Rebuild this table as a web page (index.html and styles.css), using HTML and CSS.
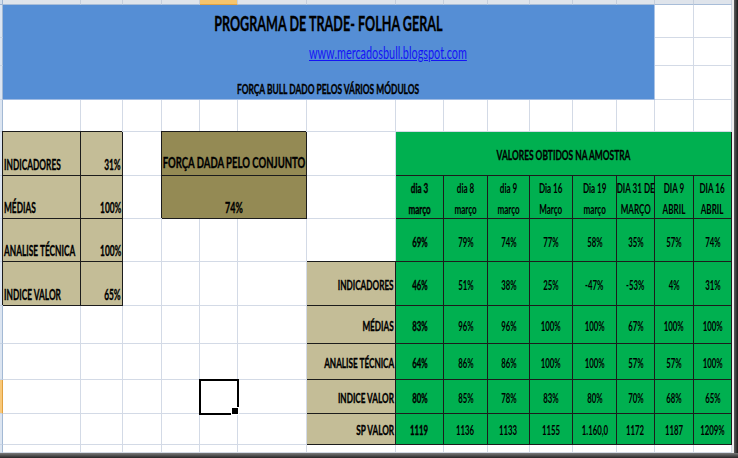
FILE: index.html
```html
<!DOCTYPE html>
<html lang="pt">
<head>
<meta charset="utf-8">
<title>Programa de Trade - Folha Geral</title>
<link rel="stylesheet" href="styles.css">
</head>
<body>
<div class="win">
  <div class="corner"></div>
  <div class="colhead">
    <div></div><div></div><div></div><div></div><div class="on"></div><div></div><div></div><div></div><div></div><div></div><div></div><div></div><div></div><div></div><div></div>
  </div>
  <div class="frame-r"></div>
  <div class="rowhead">
    <div></div><div></div><div></div><div></div><div></div><div></div><div></div><div></div><div></div><div></div><div class="on"></div><div></div><div></div>
  </div>
  <div class="sheet">
    <div class="e"></div><div class="e"></div><div class="e"></div><div class="e"></div><div class="e"></div><div class="e"></div><div class="e"></div><div class="e"></div><div class="e"></div><div class="e"></div>
    <div class="e"></div><div class="e"></div><div class="e"></div><div class="e"></div><div class="e"></div><div class="e"></div><div class="e"></div><div class="e"></div><div class="e"></div><div class="e"></div>
    <div class="e"></div><div class="e"></div><div class="e"></div><div class="e"></div><div class="e"></div><div class="e"></div><div class="e"></div><div class="e"></div><div class="e"></div><div class="e"></div>
    <div class="e"></div><div class="e"></div><div class="e"></div><div class="e"></div><div class="e"></div><div class="e"></div><div class="e"></div><div class="e"></div><div class="e"></div><div class="e"></div>
    <div class="e"></div><div class="e"></div><div class="e"></div><div class="e"></div><div class="e"></div><div class="e"></div><div class="e"></div><div class="e"></div><div class="e"></div><div class="e"></div>
    <div class="e"></div><div class="e"></div><div class="e"></div><div class="e"></div><div class="e"></div><div class="e"></div><div class="e"></div><div class="e"></div><div class="e"></div><div class="e"></div>
    <div class="e"></div><div class="e"></div><div class="e"></div><div class="e"></div><div class="e"></div><div class="e"></div><div class="e"></div><div class="e"></div><div class="e"></div>

    <div class="banner">
      <div class="b-title"><span class="t">PROGRAMA DE TRADE- FOLHA GERAL</span></div>
      <div class="b-link"><a class="t" href="#">www.mercadosbull.blogspot.com</a></div>
      <div class="b-sub"><span class="t">FORÇA BULL DADO PELOS VÁRIOS MÓDULOS</span></div>
    </div>

    <div class="lt">
      <div class="k"><span class="t">INDICADORES</span></div><div class="v"><span class="t">31%</span></div>
      <div class="k"><span class="t">MÉDIAS</span></div><div class="v"><span class="t">100%</span></div>
      <div class="k"><span class="t">ANALISE TÉCNICA</span></div><div class="v"><span class="t">100%</span></div>
      <div class="k"><span class="t">INDICE VALOR</span></div><div class="v"><span class="t">65%</span></div>
    </div>

    <div class="ol">
      <div class="ol-h"><span class="t">FORÇA DADA PELO CONJUNTO</span></div>
      <div class="ol-v"><span class="t">74%</span></div>
    </div>

    <div class="res">
      <div class="w"></div>
      <div class="hd"><span class="t">VALORES OBTIDOS NA AMOSTRA</span></div>

      <div class="w"></div>
      <div class="d b"><span class="t">dia 3<br>março</span></div>
      <div class="d"><span class="t">dia 8<br>março</span></div>
      <div class="d"><span class="t">dia 9<br>março</span></div>
      <div class="d"><span class="t">Dia 16<br>Março</span></div>
      <div class="d"><span class="t">Dia 19<br>março</span></div>
      <div class="d"><span class="t">DIA 31 DE<br>MARÇO</span></div>
      <div class="d"><span class="t">DIA 9<br>ABRIL</span></div>
      <div class="d"><span class="t">DIA 16<br>ABRIL</span></div>

      <div class="w"></div>
      <div class="g top b"><span class="t">69%</span></div>
      <div class="g top"><span class="t">79%</span></div>
      <div class="g top"><span class="t">74%</span></div>
      <div class="g top"><span class="t">77%</span></div>
      <div class="g top"><span class="t">58%</span></div>
      <div class="g top"><span class="t">35%</span></div>
      <div class="g top"><span class="t">57%</span></div>
      <div class="g top"><span class="t">74%</span></div>

      <div class="lb"><span class="t">INDICADORES</span></div>
      <div class="g b"><span class="t">46%</span></div>
      <div class="g"><span class="t">51%</span></div>
      <div class="g"><span class="t">38%</span></div>
      <div class="g"><span class="t">25%</span></div>
      <div class="g"><span class="t">-47%</span></div>
      <div class="g"><span class="t">-53%</span></div>
      <div class="g"><span class="t">4%</span></div>
      <div class="g"><span class="t">31%</span></div>

      <div class="lb"><span class="t">MÉDIAS</span></div>
      <div class="g b"><span class="t">83%</span></div>
      <div class="g"><span class="t">96%</span></div>
      <div class="g"><span class="t">96%</span></div>
      <div class="g"><span class="t">100%</span></div>
      <div class="g"><span class="t">100%</span></div>
      <div class="g"><span class="t">67%</span></div>
      <div class="g"><span class="t">100%</span></div>
      <div class="g"><span class="t">100%</span></div>

      <div class="lb"><span class="t">ANALISE TÉCNICA</span></div>
      <div class="g b"><span class="t">64%</span></div>
      <div class="g"><span class="t">86%</span></div>
      <div class="g"><span class="t">86%</span></div>
      <div class="g"><span class="t">100%</span></div>
      <div class="g"><span class="t">100%</span></div>
      <div class="g"><span class="t">57%</span></div>
      <div class="g"><span class="t">57%</span></div>
      <div class="g"><span class="t">100%</span></div>

      <div class="lb"><span class="t">INDICE VALOR</span></div>
      <div class="g b"><span class="t">80%</span></div>
      <div class="g"><span class="t">85%</span></div>
      <div class="g"><span class="t">78%</span></div>
      <div class="g"><span class="t">83%</span></div>
      <div class="g"><span class="t">80%</span></div>
      <div class="g"><span class="t">70%</span></div>
      <div class="g"><span class="t">68%</span></div>
      <div class="g"><span class="t">65%</span></div>

      <div class="lb"><span class="t">SP VALOR</span></div>
      <div class="g b"><span class="t">1119</span></div>
      <div class="g"><span class="t">1136</span></div>
      <div class="g"><span class="t">1133</span></div>
      <div class="g"><span class="t">1155</span></div>
      <div class="g"><span class="t">1.160,0</span></div>
      <div class="g"><span class="t">1172</span></div>
      <div class="g"><span class="t">1187</span></div>
      <div class="g"><span class="t">1209%</span></div>
    </div>

    <div class="cur"></div>
  </div>
  <div class="frame-b"></div>
</div>
</body>
</html>
```

FILE: styles.css
```css
:root {
  --cols: 78px 42px 39px 38px 38px 69px 89px 48px 44px 42px 43px 44px 38px 39px 38px;
  --rows: 33px 28px 34px 32px 44px 43px 43px 44px 38px 36px 34px 31px 8px;
  --grid: #d3dae6;
  --dk: #1c1c1c;
  --blue: #558ed5;
  --green: #00b050;
  --tan: #c4bd97;
  --olive: #948a54;
}

* { box-sizing: border-box; margin: 0; padding: 0; }

html, body {
  width: 738px;
  height: 458px;
  overflow: hidden;
  background: #fff;
}

body {
  font-family: Lato, "Open Sans", "Liberation Sans", sans-serif;
  font-weight: 700;
  color: #000;
}

.win {
  display: grid;
  grid-template-columns: 3px 729px 6px;
  grid-template-rows: 5px 448px 5px;
  width: 738px;
  height: 458px;
}

.corner {
  grid-row: 1; grid-column: 1;
  background: #d3deec;
  border-right: 1px solid #9fb6d2;
  border-bottom: 1px solid #9fb6d2;
}

.colhead {
  grid-row: 1; grid-column: 2;
  display: grid;
  grid-template-columns: var(--cols);
}
.colhead > div {
  background: #dfe4eb;
  border-right: 1px solid #c6cfdc;
  border-bottom: 1px solid #a8bdd8;
}
.colhead > .on {
  background: #f6c56d;
  border-bottom-color: #e3a544;
}

.rowhead {
  grid-row: 2; grid-column: 1;
  display: grid;
  grid-template-rows: var(--rows);
}
.rowhead > div {
  background: #dce5f1;
  border-right: 1px solid #a3b9d4;
  border-bottom: 1px solid #c8d4e4;
}
.rowhead > .on {
  background: #f9c878;
  border-right-color: #e0a040;
}

.frame-r {
  grid-row: 1 / 3; grid-column: 3;
  background: linear-gradient(to right, #ececec 0 2px, #5c5c5c 2px, #1c1c1c 100%);
}
.frame-b {
  grid-row: 3; grid-column: 1 / 4;
  background: linear-gradient(#7a7a7a, #262626);
}

.sheet {
  grid-row: 2; grid-column: 2;
  display: grid;
  grid-template-columns: var(--cols);
  grid-template-rows: var(--rows);
}
.e {
  border-right: 1px solid var(--grid);
  border-bottom: 1px solid var(--grid);
}

/* squeezed spreadsheet text */
.t {
  display: inline-block;
  white-space: nowrap;
  transform: scaleX(var(--s, 0.6));
  transform-origin: center;
  -webkit-text-stroke: var(--stroke, 0.35px) currentColor;
}

/* banner */
.banner {
  grid-column: 1 / 14;
  grid-row: 1 / 4;
  background: var(--blue);
  border-right: 1px solid #a9c3e6;
  border-bottom: 1px solid #9fbbe3;
  display: grid;
  grid-template-columns: minmax(0, 1fr);
  grid-template-rows: 33px 28px 1fr;
  min-width: 0;
}
.banner > div { min-width: 0; }
.b-title {
  display: flex;
  justify-content: center;
  align-items: flex-end;
  padding-bottom: 5px;
  font-size: 21px;
  line-height: 21px;
}
.b-link {
  --s: 0.64;
  --stroke: 0px;
  display: flex;
  align-items: flex-end;
  padding-left: 306px;
  padding-bottom: 5px;
  font-size: 17px;
  line-height: 17px;
  font-weight: 400;
}
.b-link a {
  color: #1414f5;
  text-decoration: underline;
  transform-origin: left;
}
.b-sub {
  --s: 0.646;
  display: flex;
  align-items: flex-end;
  padding-left: 234px;
  padding-bottom: 3px;
  font-size: 13px;
  line-height: 13px;
}
.b-sub .t { transform-origin: left; }

/* left table */
.lt {
  --s: 0.555;
  grid-column: 1 / 3;
  grid-row: 5 / 9;
  display: grid;
  grid-template-columns: 78px 42px;
  grid-template-rows: 44px 43px 43px 44px;
  background: var(--tan);
  box-shadow: -1px -1px 0 0 var(--dk);
}
.lt > div {
  display: flex;
  min-width: 0;
  align-items: flex-end;
  padding-bottom: 3px;
  border-right: 1px solid var(--dk);
  border-bottom: 1px solid var(--dk);
  font-size: 15px;
  line-height: 15px;
}
.k { justify-content: flex-start; padding-left: 1px; }
.k .t { transform-origin: left; }
.v { justify-content: flex-end; padding-right: 1px; }
.v .t { transform-origin: right; }

/* olive box */
.ol {
  grid-column: 4 / 7;
  grid-row: 5 / 7;
  display: grid;
  grid-template-columns: minmax(0, 1fr);
  grid-template-rows: 44px 43px;
  background: var(--olive);
  box-shadow: -1px -1px 0 0 var(--dk);
  min-width: 0;
}
.ol > div {
  display: flex;
  min-width: 0;
  justify-content: center;
  align-items: flex-end;
  border-right: 1px solid var(--dk);
  border-bottom: 1px solid var(--dk);
  font-size: 15px;
  line-height: 15px;
}
.ol-h { --s: 0.637; padding-bottom: 5px; }
.ol-v { padding-bottom: 3px; }

/* results table */
.res {
  grid-column: 7 / 16;
  grid-row: 5 / 13;
  display: grid;
  grid-template-columns: 89px 48px 44px 42px 43px 44px 38px 39px 38px;
  grid-template-rows: 44px 43px 43px 44px 38px 36px 34px 31px;
  min-width: 0;
}
.res > div {
  display: flex;
  min-width: 0;
  justify-content: center;
  align-items: center;
  border-right: 1px solid var(--dk);
  border-bottom: 1px solid var(--dk);
}
.res > .w {
  border-right-color: var(--grid);
  border-bottom-color: var(--grid);
}
.hd {
  grid-column: span 8;
  background: var(--green);
  font-size: 14px;
  line-height: 14px;
  padding-top: 2px;
}
.d {
  --stroke: 0px;
  background: var(--green);
  align-items: flex-start !important;
  padding-top: 2px;
  font-size: 13.5px;
  line-height: 21px;
  text-align: center;
  font-weight: 700;
}
.g {
  --stroke: 0px;
  background: var(--green);
  font-size: 13px;
  line-height: 13px;
  padding-top: 3px;
  font-weight: 700;
}
.g.top { padding-top: 5px; }
.res > .b { --stroke: 0.35px; }
.lb {
  --s: 0.63;
  background: var(--tan);
  justify-content: flex-end !important;
  padding-right: 1px;
  padding-top: 3px;
  font-size: 13px;
  line-height: 13px;
  box-shadow: 0 -1px 0 0 var(--dk);
}
.lb .t { transform-origin: right; }

/* active cell */
.cur {
  grid-column: 5;
  grid-row: 11;
  position: relative;
  border-right: 1px solid var(--grid);
  border-bottom: 1px solid var(--grid);
  outline: 2px solid #000;
  outline-offset: -1px;
}
.cur::after {
  content: "";
  position: absolute;
  right: -2px;
  bottom: -2px;
  width: 6px;
  height: 6px;
  background: #000;
  border: 1px solid #fff;
}
```
